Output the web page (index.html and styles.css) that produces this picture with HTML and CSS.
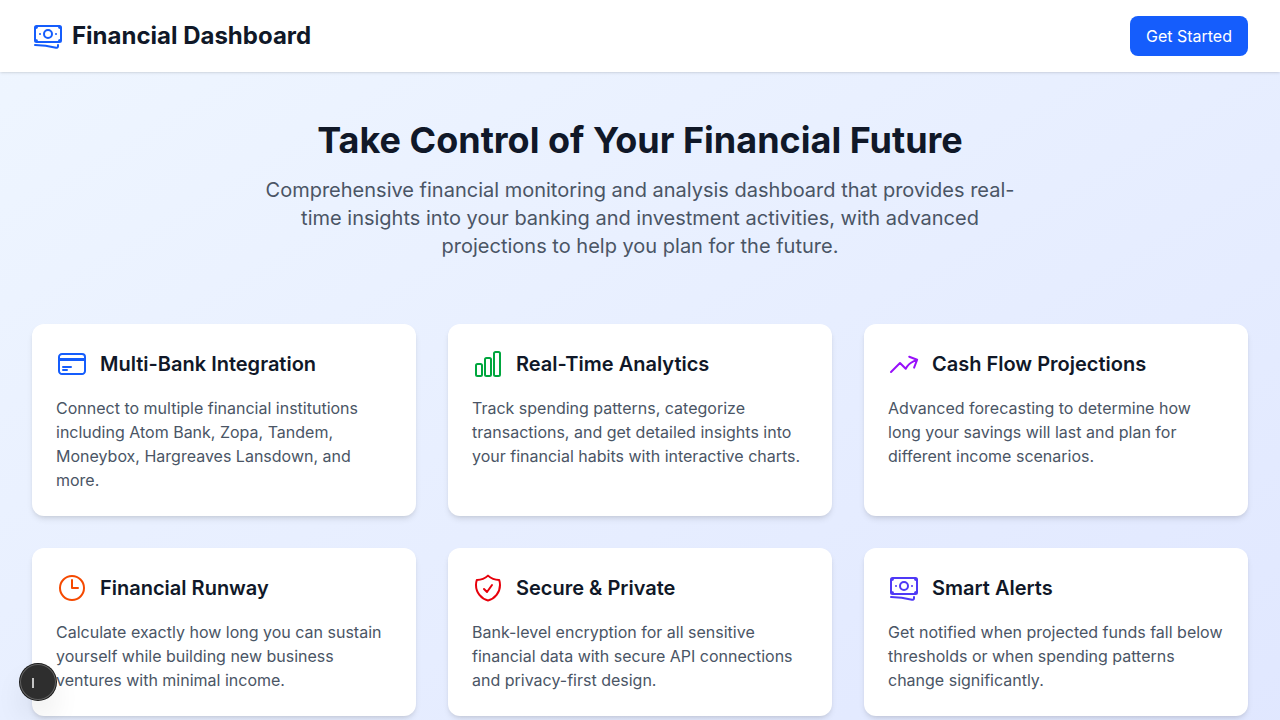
FILE: index.html
```html
<!DOCTYPE html>
<html lang="en">
<head>
<meta charset="utf-8">
<meta name="viewport" content="width=device-width, initial-scale=1">
<title>Financial Dashboard</title>
<link rel="stylesheet" href="styles.css">
</head>
<body>
<svg class="sprite" aria-hidden="true">
  <symbol id="banknotes" viewBox="0 0 24 24"><path d="M2.25 18.75a60.07 60.07 0 0 1 15.797 2.101c.727.198 1.453-.342 1.453-1.096V18.75M3.75 4.5v.75A.75.75 0 0 1 3 6h-.75m0 0v-.375c0-.621.504-1.125 1.125-1.125H20.25M2.25 6v9m18-10.5v.75c0 .414.336.75.75.75h.75m-1.5-1.5h.375c.621 0 1.125.504 1.125 1.125v9.75c0 .621-.504 1.125-1.125 1.125h-.375m1.5-1.5H21a.75.75 0 0 0-.75.75v.75m0 0H3.75m0 0h-.375a1.125 1.125 0 0 1-1.125-1.125V15m1.5 1.5v-.75A.75.75 0 0 0 3 15h-.75M15 10.5a3 3 0 1 1-6 0 3 3 0 0 1 6 0Zm3 0h.008v.008H18V10.5Zm-12 0h.008v.008H6V10.5Z"/></symbol>
</svg>
<header class="header">
  <div class="brand">
    <svg class="icon blue" aria-hidden="true"><use href="#banknotes"/></svg>
    <h1 class="brand-name">Financial Dashboard</h1>
  </div>
  <button class="cta" type="button">Get Started</button>
</header>
<main class="main">
  <section class="hero">
    <h2 class="hero-title">Take Control of Your Financial Future</h2>
    <p class="hero-text">Comprehensive financial monitoring and analysis dashboard that provides real-time insights into your banking and investment activities, with advanced projections to help you plan for the future.</p>
  </section>
  <section class="features">
    <article class="card">
      <div class="card-head">
        <svg class="icon blue" viewBox="0 0 24 24" aria-hidden="true"><path d="M2.25 8.25h19.5M2.25 9h19.5m-16.5 5.25h6m-6 2.25h3m-3.75 3h15a2.25 2.25 0 0 0 2.25-2.25V6.75A2.25 2.25 0 0 0 19.5 4.5h-15a2.25 2.25 0 0 0-2.25 2.25v10.5A2.25 2.25 0 0 0 4.5 19.5Z"/></svg>
        <h3 class="card-title">Multi-Bank Integration</h3>
      </div>
      <p class="card-text">Connect to multiple financial institutions including Atom Bank, Zopa, Tandem, Moneybox, Hargreaves Lansdown, and more.</p>
    </article>
    <article class="card">
      <div class="card-head">
        <svg class="icon green" viewBox="0 0 24 24" aria-hidden="true"><path d="M3 13.125C3 12.504 3.504 12 4.125 12h2.25c.621 0 1.125.504 1.125 1.125v6.75C7.5 20.496 6.996 21 6.375 21h-2.25A1.125 1.125 0 0 1 3 19.875v-6.75ZM9.75 8.625c0-.621.504-1.125 1.125-1.125h2.25c.621 0 1.125.504 1.125 1.125v11.25c0 .621-.504 1.125-1.125 1.125h-2.25a1.125 1.125 0 0 1-1.125-1.125V8.625ZM16.5 4.125c0-.621.504-1.125 1.125-1.125h2.25C20.496 3 21 3.504 21 4.125v15.75c0 .621-.504 1.125-1.125 1.125h-2.25a1.125 1.125 0 0 1-1.125-1.125V4.125Z"/></svg>
        <h3 class="card-title">Real-Time Analytics</h3>
      </div>
      <p class="card-text">Track spending patterns, categorize transactions, and get detailed insights into your financial habits with interactive charts.</p>
    </article>
    <article class="card">
      <div class="card-head">
        <svg class="icon purple" viewBox="0 0 24 24" aria-hidden="true"><path d="M2.25 18 9 11.25l4.306 4.306a11.95 11.95 0 0 1 5.814-5.518l2.74-1.22m0 0-5.94-2.281m5.94 2.28-2.28 5.941"/></svg>
        <h3 class="card-title">Cash Flow Projections</h3>
      </div>
      <p class="card-text">Advanced forecasting to determine how long your savings will last and plan for different income scenarios.</p>
    </article>
    <article class="card">
      <div class="card-head">
        <svg class="icon orange" viewBox="0 0 24 24" aria-hidden="true"><path d="M12 6v6h4.5m4.5 0a9 9 0 1 1-18 0 9 9 0 0 1 18 0Z"/></svg>
        <h3 class="card-title">Financial Runway</h3>
      </div>
      <p class="card-text">Calculate exactly how long you can sustain yourself while building new business ventures with minimal income.</p>
    </article>
    <article class="card">
      <div class="card-head">
        <svg class="icon red" viewBox="0 0 24 24" aria-hidden="true"><path d="M9 12.75 11.25 15 15 9.75m-3-7.036A11.959 11.959 0 0 1 3.598 6 11.99 11.99 0 0 0 3 9.749c0 5.592 3.824 10.29 9 11.623 5.176-1.332 9-6.03 9-11.622 0-1.31-.21-2.571-.598-3.751h-.152c-3.196 0-6.1-1.248-8.25-3.285Z"/></svg>
        <h3 class="card-title">Secure &amp; Private</h3>
      </div>
      <p class="card-text">Bank-level encryption for all sensitive financial data with secure API connections and privacy-first design.</p>
    </article>
    <article class="card">
      <div class="card-head">
        <svg class="icon indigo" aria-hidden="true"><use href="#banknotes"/></svg>
        <h3 class="card-title">Smart Alerts</h3>
      </div>
      <p class="card-text">Get notified when projected funds fall below thresholds or when spending patterns change significantly.</p>
    </article>
  </section>
</main>
<button class="dev-badge" type="button" aria-label="Open developer tools">
  <svg class="dev-mark" viewBox="0 0 36 36" aria-hidden="true"><path d="M13 14v10"/></svg>
</button>
</body>
</html>
```
FILE: styles.css
```css
*,
*::before,
*::after {
  box-sizing: border-box;
}

body {
  margin: 0;
  min-height: 100vh;
  font-family: Inter, "Liberation Sans", sans-serif;
  font-size: 16px;
  line-height: 24px;
  color: #101828;
  background: linear-gradient(to bottom right, #eff6ff, #e0e7ff);
}

h1,
h2,
h3,
p {
  margin: 0;
}

.sprite {
  position: absolute;
  width: 0;
  height: 0;
}

.icon {
  flex: none;
  width: 32px;
  height: 32px;
  fill: none;
  stroke: currentColor;
  stroke-width: 1.5;
  stroke-linecap: round;
  stroke-linejoin: round;
}

.blue { color: #155dfc; }
.green { color: #00a63e; }
.purple { color: #9810fa; }
.orange { color: #f54900; }
.red { color: #e7000b; }
.indigo { color: #4f39f6; }

.header {
  display: flex;
  align-items: center;
  justify-content: space-between;
  padding: 16px 32px;
  background: #fff;
  box-shadow: 0 1px 3px rgba(0, 0, 0, 0.1), 0 1px 2px -1px rgba(0, 0, 0, 0.1);
}

.brand {
  display: flex;
  align-items: center;
  gap: 8px;
}

.brand-name {
  font-size: 24px;
  line-height: 32px;
  font-weight: 700;
}

.cta {
  padding: 8px 16px;
  border: 0;
  border-radius: 8px;
  font: inherit;
  color: #fff;
  background: #155dfc;
  cursor: pointer;
}

.main {
  max-width: 1280px;
  margin: 0 auto;
  padding: 48px 32px;
}

.hero {
  margin-bottom: 64px;
  text-align: center;
}

.hero-title {
  margin-bottom: 16px;
  font-size: 36px;
  line-height: 40px;
  font-weight: 700;
}

.hero-text {
  max-width: 768px;
  margin: 0 auto;
  font-size: 20px;
  line-height: 28px;
  color: #4a5565;
}

.features {
  display: grid;
  grid-template-columns: repeat(3, 1fr);
  gap: 32px;
}

.card {
  padding: 24px;
  border-radius: 12px;
  background: #fff;
  box-shadow: 0 4px 6px -1px rgba(0, 0, 0, 0.1), 0 2px 4px -2px rgba(0, 0, 0, 0.1);
}

.card-head {
  display: flex;
  align-items: center;
  gap: 12px;
  margin-bottom: 16px;
}

.card-title {
  font-size: 20px;
  line-height: 28px;
  font-weight: 600;
}

.card-text {
  color: #4a5565;
}

@media (max-width: 900px) {
  .features {
    grid-template-columns: 1fr;
  }
}

.dev-badge {
  position: fixed;
  left: 20px;
  bottom: 20px;
  width: 36px;
  height: 36px;
  padding: 0;
  border: 0;
  border-radius: 50%;
  background: #2e2e2e;
  box-shadow: 0 0 0 1px #171717, inset 0 0 0 1px rgba(255, 255, 255, 0.25), 0 16px 32px -8px rgba(0, 0, 0, 0.24);
}

.dev-mark {
  display: block;
  width: 36px;
  height: 36px;
  fill: none;
  stroke: #c4c4c4;
  stroke-width: 2;
}
```
